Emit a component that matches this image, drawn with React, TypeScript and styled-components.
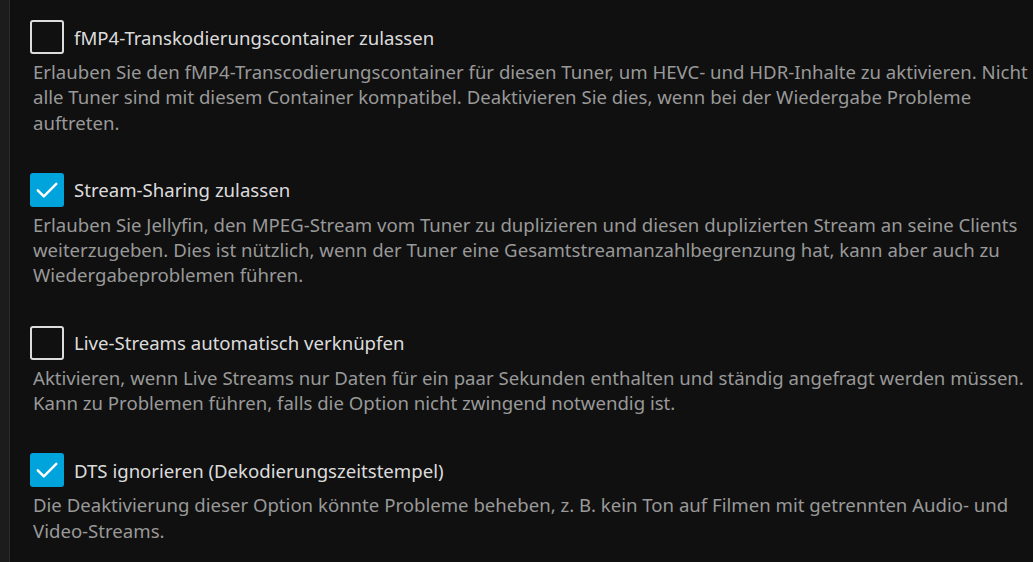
import React from 'react';
import styled, { createGlobalStyle } from 'styled-components';

const GlobalStyle = createGlobalStyle`
  html, body {
    margin: 0;
    padding: 0;
    background: #101010;
    overflow: hidden;
  }
  body {
    font-family: 'Noto Sans', 'DejaVu Sans', sans-serif;
    -webkit-font-smoothing: antialiased;
  }
`;

const Page = styled.div`
  display: flex;
  min-height: 562px;
  background: #101010;
`;

const SideStrip = styled.div`
  width: 9px;
  flex: none;
  background: #1c1c1c;
  border-right: 1px solid #2b2b2b;
`;

const Content = styled.div`
  flex: 1;
  padding: 20px 0 0 20px;
  min-width: 0;
`;

const OptionBlock = styled.div`
  margin-bottom: 38px;
`;

const CheckboxRow = styled.label`
  display: flex;
  align-items: center;
  gap: 10px;
  height: 34px;
  cursor: pointer;
`;

const Box = styled.span<{ checked?: boolean }>`
  box-sizing: border-box;
  width: 34px;
  height: 34px;
  flex: none;
  border-radius: 3px;
  display: flex;
  align-items: center;
  justify-content: center;
  border: ${({ checked }) => (checked ? 'none' : '2px solid #dcdcdc')};
  background: ${({ checked }) => (checked ? '#00a4dc' : 'transparent')};
`;

const Label = styled.span`
  font-size: 18.6px;
  color: rgba(255, 255, 255, 0.87);
`;

const Description = styled.div`
  margin-top: 5px;
  padding-left: 3px;
  font-size: 18.6px;
  line-height: 25.3px;
  color: #999;
`;

const options = [
  {
    label: 'fMP4-Transkodierungscontainer zulassen',
    checked: false,
    text: 'Erlauben Sie den fMP4-Transcodierungscontainer für diesen Tuner, um HEVC- und HDR-Inhalte zu aktivieren. Nicht alle Tuner sind mit diesem Container kompatibel. Deaktivieren Sie dies, wenn bei der Wiedergabe Probleme auftreten.',
  },
  {
    label: 'Stream-Sharing zulassen',
    checked: true,
    text: 'Erlauben Sie Jellyfin, den MPEG-Stream vom Tuner zu duplizieren und diesen duplizierten Stream an seine Clients weiterzugeben. Dies ist nützlich, wenn der Tuner eine Gesamtstreamanzahlbegrenzung hat, kann aber auch zu Wiedergabeproblemen führen.',
  },
  {
    label: 'Live-Streams automatisch verknüpfen',
    checked: false,
    text: 'Aktivieren, wenn Live Streams nur Daten für ein paar Sekunden enthalten und ständig angefragt werden müssen. Kann zu Problemen führen, falls die Option nicht zwingend notwendig ist.',
  },
  {
    label: 'DTS ignorieren (Dekodierungszeitstempel)',
    checked: true,
    text: 'Die Deaktivierung dieser Option könnte Probleme beheben, z. B. kein Ton auf Filmen mit getrennten Audio- und Video-Streams.',
  },
];

function CheckIcon() {
  return (
    <svg width="24" height="24" viewBox="0 0 24 24" fill="none">
      <path d="M2.8 12.3l6 6L21.3 5.8" stroke="#fff" strokeWidth="2.5" strokeLinecap="round" strokeLinejoin="round" />
    </svg>
  );
}

export default function App() {
  return (
    <>
      <GlobalStyle />
      <Page>
        <SideStrip />
        <Content>
          {options.map((o) => (
            <OptionBlock key={o.label}>
              <CheckboxRow>
                <Box checked={o.checked}>{o.checked && <CheckIcon />}</Box>
                <Label>{o.label}</Label>
              </CheckboxRow>
              <Description>{o.text}</Description>
            </OptionBlock>
          ))}
        </Content>
      </Page>
    </>
  );
}
